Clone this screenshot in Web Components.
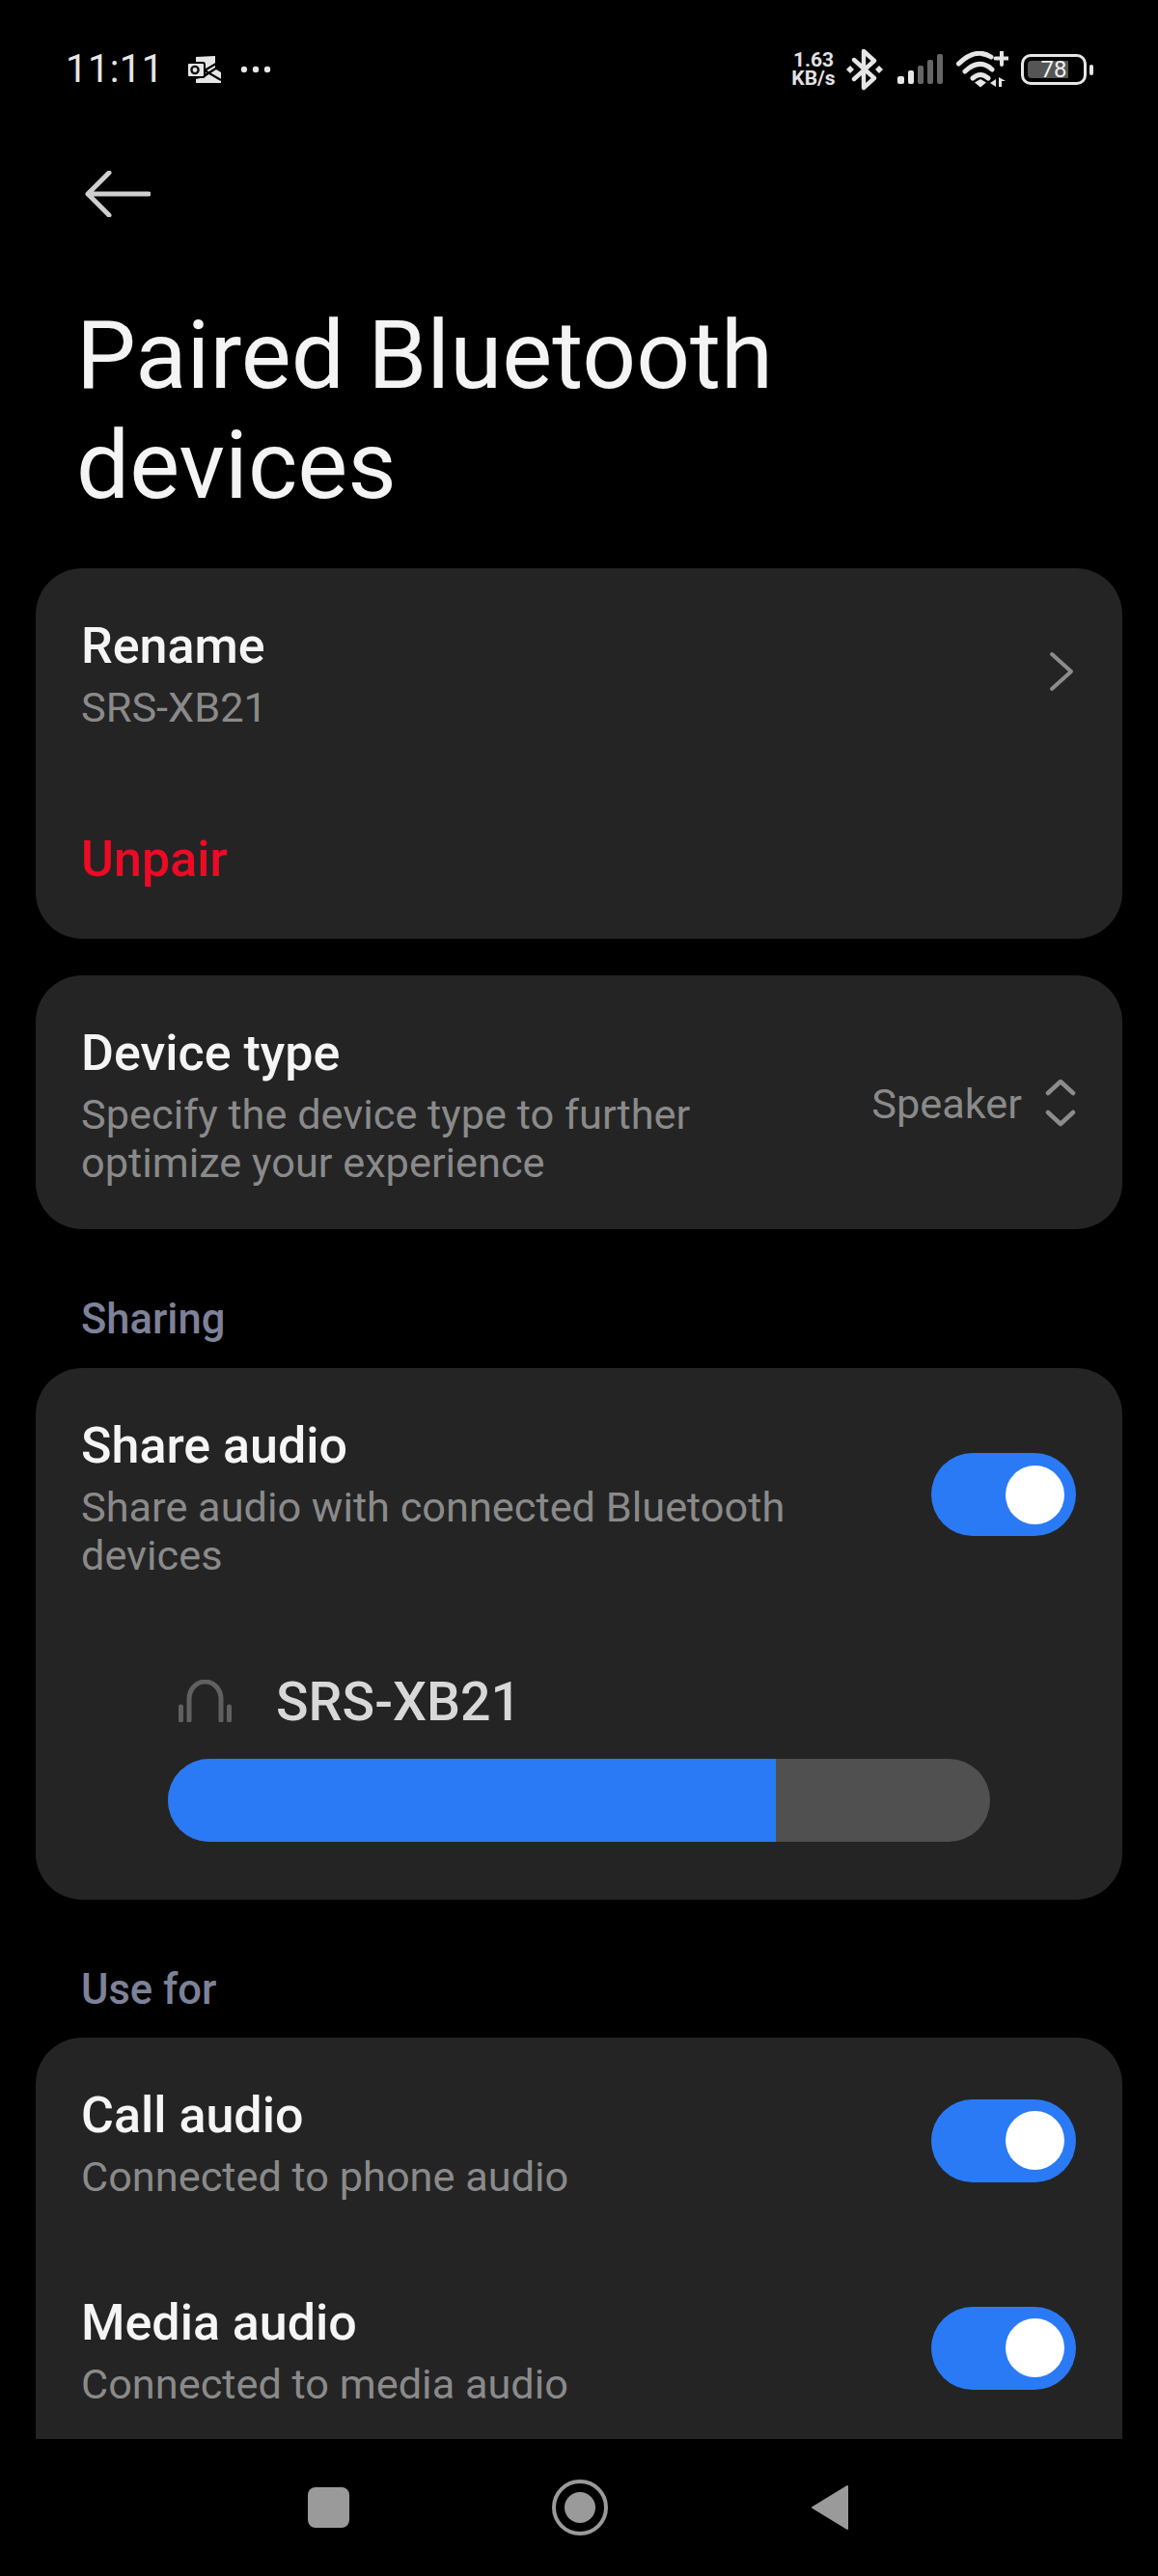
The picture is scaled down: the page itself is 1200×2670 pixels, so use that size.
<!DOCTYPE html>
<html>
<head>
<meta charset="utf-8">
<title>Paired Bluetooth devices</title>
<style>
  html, body { margin: 0; background: #000; }
  body { width: 1200px; height: 2670px; overflow: hidden; font-family: Roboto, "Liberation Sans", sans-serif; }
</style>
</head>
<body>
<phone-screen>
  <status-bar slot="status"></status-bar>
  <page-header slot="header">Paired Bluetooth devices</page-header>

  <setting-card class="rename">
    <setting-row chevron>
      <span slot="title">Rename</span>
      <span slot="sub">SRS-XB21</span>
    </setting-row>
    <danger-row>Unpair</danger-row>
  </setting-card>

  <setting-card>
    <setting-row>
      <span slot="title">Device type</span>
      <span slot="sub">Specify the device type to further optimize your experience</span>
      <type-picker slot="end">Speaker</type-picker>
    </setting-row>
  </setting-card>

  <section-label>Sharing</section-label>
  <setting-card>
    <setting-row>
      <span slot="title">Share audio</span>
      <span slot="sub">Share audio with connected Bluetooth devices</span>
      <toggle-switch slot="end"></toggle-switch>
    </setting-row>
    <volume-slider name="SRS-XB21" value="74"></volume-slider>
  </setting-card>

  <section-label>Use for</section-label>
  <!-- this card runs on under the nav bar, so its bottom corners stay out of view -->
  <setting-card class="cut-off">
    <setting-row compact>
      <span slot="title">Call audio</span>
      <span slot="sub">Connected to phone audio</span>
      <toggle-switch slot="end"></toggle-switch>
    </setting-row>
    <setting-row compact>
      <span slot="title">Media audio</span>
      <span slot="sub">Connected to media audio</span>
      <toggle-switch slot="end"></toggle-switch>
    </setting-row>
  </setting-card>

  <nav-bar slot="nav"></nav-bar>
</phone-screen>

<script>
function shadow(el, html) {
  el.attachShadow({ mode: "open" }).innerHTML = html;
}

class PhoneScreen extends HTMLElement {
  constructor() {
    super();
    shadow(this, `
      <style>
        :host { display: flex; flex-direction: column; width: 1200px; height: 2670px; background: #000; color: #fff; }
        main { flex: 1; min-height: 0; overflow: hidden; padding: 0 37px; }
      </style>
      <slot name="status"></slot>
      <slot name="header"></slot>
      <main><slot></slot></main>
      <slot name="nav"></slot>
    `);
  }
}

class StatusBar extends HTMLElement {
  constructor() {
    super();
    shadow(this, `
      <style>
        :host { display: flex; align-items: center; height: 144px; padding: 0 68px; box-sizing: border-box; color: #e6e6e6; }
        .time { font-size: 40px; line-height: 1; letter-spacing: .4px; margin-right: 23px; }
        .left { display: flex; align-items: center; flex: 1; }
        .right { display: flex; align-items: center; }
        svg { display: block; }
        .speed { font-size: 21px; line-height: 19px; font-weight: 700; text-align: center; width: 50px; margin-right: 9px; color: #e2e2e2; }
      </style>
      <div class="left">
        <span class="time">11:11</span>
        <svg width="36" height="28" viewBox="0 0 36 28" style="margin-right:20px">
          <path d="M10 1 L30 0 V12 L19 19 L10 14 Z M19 22 L31 14 L36 17 V28 H10 V24 Z" fill="#e6e6e6"/>
          <rect x="1" y="7" width="18" height="15" rx="2" fill="#e6e6e6" stroke="#000" stroke-width="2"/>
          <circle cx="9" cy="14.5" r="3.6" fill="none" stroke="#111" stroke-width="2.4"/>
          <path d="M19 15 L36 5 M19 15 L36 25" stroke="#000" stroke-width="2.2" fill="none"/>
        </svg>
        <svg width="32" height="8" viewBox="0 0 32 8">
          <circle cx="4" cy="4" r="3.2" fill="#e6e6e6"/><circle cx="16" cy="4" r="3.2" fill="#e6e6e6"/><circle cx="28" cy="4" r="3.2" fill="#e6e6e6"/>
        </svg>
      </div>
      <div class="right">
        <span class="speed">1.63<br>KB/s</span>
        <svg width="38" height="44" viewBox="0 0 38 44" style="margin-right:15px">
          <path d="M8 12 L29 31 L18 41 V3 L29 13 L8 32" fill="none" stroke="#e6e6e6" stroke-width="4.4" stroke-linejoin="round" stroke-linecap="round"/>
          <path d="M4 18 L8 22 L4 26 L0 22 Z M34 18 L38 22 L34 26 L30 22 Z" fill="#e6e6e6"/>
        </svg>
        <svg width="48" height="32" viewBox="0 0 48 32" style="margin-right:13px">
          <rect x="0" y="23" width="7" height="8" rx="2" fill="#e6e6e6"/>
          <rect x="11" y="17" width="6" height="14" rx="2" fill="#e6e6e6"/>
          <rect x="21" y="12" width="6" height="19" rx="2" fill="#666"/>
          <rect x="31" y="6" width="6" height="25" rx="2" fill="#666"/>
          <rect x="41" y="0" width="6" height="31" rx="2" fill="#666"/>
        </svg>
        <svg width="54" height="38" viewBox="0 0 54 38" style="margin-right:13px">
          <g fill="none" stroke="#e6e6e6" stroke-width="5" stroke-linecap="round">
            <path d="M2.500 13 Q20 -4 36 6"/>
            <path d="M9 21 Q24 7 37 19"/>
            <path d="M17 28 Q25 21 33 28"/>
            <path d="M47 1 V14 M40.500 7.500 H53.500" stroke-width="4"/>
          </g>
          <path d="M19 32.500 L25 29 L31 32.500 L25 37.500 Z" fill="#e6e6e6"/>
          <path d="M41 29 V37 L35 33 Z M44 27 V37 H47 V31 L51 31 Z" fill="#e6e6e6"/>
        </svg>
        <batt-icon level="78"></batt-icon>
      </div>
    `);
  }
}

class BattIcon extends HTMLElement {
  constructor() {
    super();
    const level = this.getAttribute("level");
    shadow(this, `
      <style>
        :host { display: flex; align-items: center; margin-right: -1px; }
        .body { position: relative; width: 68px; height: 32px; box-sizing: border-box; border: 3px solid #e6e6e6; border-radius: 10px; padding: 4px; }
        .fill { width: 42px; height: 100%; background: #555; border-radius: 4px 0 0 4px; }
        .num { position: absolute; inset: 0; display: flex; align-items: center; justify-content: center; font-size: 24px; color: #f0f0f0; }
        .tip { width: 4px; height: 11px; margin-left: 3px; background: #e6e6e6; border-radius: 2px; }
      </style>
      <div class="body"><div class="fill"></div><span class="num">${level}</span></div>
      <div class="tip"></div>
    `);
  }
}

class PageHeader extends HTMLElement {
  constructor() {
    super();
    shadow(this, `
      <style>
        :host { display: block; padding: 0 79px; }
        svg { display: block; margin: 33px 0 0 9px; }
        h1 { margin: 0; padding: 87px 0 0; width: 860px; height: 277px; font-size: 98px; font-weight: 400; line-height: 114px; color: #f4f4f4; }
      </style>
      <svg width="68" height="48" viewBox="0 0 68 48">
        <path d="M66 24 H3 M25 2 L3 24 L25 46" fill="none" stroke="#cfcfcf" stroke-width="5" stroke-linecap="round" stroke-linejoin="round"/>
      </svg>
      <h1><slot></slot></h1>
    `);
  }
}

class SettingCard extends HTMLElement {
  constructor() {
    super();
    shadow(this, `
      <style>
        :host { display: block; background: #242424; border-radius: 48px; margin-bottom: 38px; overflow: hidden; }
        :host(.cut-off) { padding-bottom: 80px; }
      </style>
      <slot></slot>
    `);
  }
}

class SettingRow extends HTMLElement {
  constructor() {
    super();
    const chevron = this.hasAttribute("chevron") ? `
      <svg width="26" height="42" viewBox="0 0 26 42" style="margin-right:2px">
        <path d="M3 3 L23 21 L3 39" fill="none" stroke="#8c8c8c" stroke-width="4" stroke-linecap="round" stroke-linejoin="round"/>
      </svg>` : "";
    shadow(this, `
      <style>
        :host { display: flex; align-items: center; justify-content: space-between; padding: 46px 48px 46px 47px; }
        :host([compact]) { padding-bottom: 48px; }
        .text { width: 790px; padding-top: 3px; margin-bottom: -3px; }
        .title { font-size: 52px; font-weight: 500; line-height: 64px; color: #f5f5f5; }
        .sub { margin-top: 7px; font-size: 43.3px; line-height: 50px; color: #8a8a8a; }
      </style>
      <div class="text">
        <div class="title"><slot name="title"></slot></div>
        <div class="sub"><slot name="sub"></slot></div>
      </div>
      <slot name="end"></slot>
      ${chevron}
    `);
  }
}

class DangerRow extends HTMLElement {
  constructor() {
    super();
    shadow(this, `
      <style>
        :host { display: block; padding: 56px 47px 49px; font-size: 52px; font-weight: 500; line-height: 66px; color: #ee0a24; }
      </style>
      <slot></slot>
    `);
  }
}

class TypePicker extends HTMLElement {
  constructor() {
    super();
    shadow(this, `
      <style>
        :host { display: flex; align-items: center; gap: 24px; font-size: 43.3px; color: #8a8a8a; }
        span { padding: 3px 0 0 2px; }
        svg { display: block; }
      </style>
      <span><slot></slot></span>
      <svg width="32" height="50" viewBox="0 0 32 50">
        <path d="M3 15 L16 3 L29 15 M3 35 L16 47 L29 35" fill="none" stroke="#8c8c8c" stroke-width="4.500" stroke-linecap="round" stroke-linejoin="round"/>
      </svg>
    `);
  }
}

class ToggleSwitch extends HTMLElement {
  constructor() {
    super();
    shadow(this, `
      <style>
        :host { display: flex; align-items: center; justify-content: flex-end; flex: none; width: 150px; height: 86px; box-sizing: border-box; padding-right: 12px; background: #2a7af6; border-radius: 43px; }
        i { display: block; width: 61px; height: 61px; border-radius: 50%; background: #fff; }
      </style>
      <i></i>
    `);
  }
}

class SectionLabel extends HTMLElement {
  constructor() {
    super();
    shadow(this, `
      <style>
        :host { display: block; padding: 31px 47px 24.500px; font-size: 43.500px; font-weight: 500; line-height: 50px; color: #7e8299; }
      </style>
      <slot></slot>
    `);
  }
}

class VolumeSlider extends HTMLElement {
  constructor() {
    super();
    const name = this.getAttribute("name");
    const value = this.getAttribute("value");
    shadow(this, `
      <style>
        :host { display: block; padding: 46px 137px 60px; }
        .head { display: flex; align-items: center; gap: 46px; height: 72px; padding-left: 11px; margin-bottom: 24px; font-size: 55.500px; font-weight: 500; color: #d8d8d8; }
        .head span { padding-top: 4px; }
        svg { display: block; }
        .track { height: 86px; background: #505050; border-radius: 43px; overflow: hidden; }
        .fill { height: 100%; background: #2a7af6; width: ${value}%; }
      </style>
      <div class="head">
        <svg width="55" height="44" viewBox="0 0 55 44">
          <path d="M11 42 V20 a16.500 18 0 0 1 33 0 V42" fill="none" stroke="#606060" stroke-width="5" stroke-linecap="round"/>
          <path d="M2.500 28 V42 M52.500 28 V42" fill="none" stroke="#606060" stroke-width="5" stroke-linecap="round"/>
        </svg>
        <span>${name}</span>
      </div>
      <div class="track"><div class="fill"></div></div>
    `);
  }
}

class NavBar extends HTMLElement {
  constructor() {
    super();
    shadow(this, `
      <style>
        :host { display: block; height: 142px; background: #000; }
        .row { display: flex; align-items: center; justify-content: space-between; height: 142px; padding: 0 320px 0 319px; box-sizing: border-box; }
        svg { display: block; }
      </style>
      <div class="row">
        <svg width="43" height="42" viewBox="0 0 43 42"><rect width="43" height="42" rx="8" fill="#9a9a9a"/></svg>
        <svg width="58" height="58" viewBox="0 0 58 58">
          <circle cx="29" cy="29" r="27" fill="none" stroke="#9a9a9a" stroke-width="4"/>
          <circle cx="29" cy="29" r="16" fill="#9a9a9a"/>
        </svg>
        <svg width="40" height="48" viewBox="0 0 40 48"><path d="M38 2 V46 L2 24 Z" fill="#9a9a9a" stroke="#9a9a9a" stroke-width="2" stroke-linejoin="round"/></svg>
      </div>
    `);
  }
}

customElements.define("phone-screen", PhoneScreen);
customElements.define("status-bar", StatusBar);
customElements.define("batt-icon", BattIcon);
customElements.define("page-header", PageHeader);
customElements.define("setting-card", SettingCard);
customElements.define("setting-row", SettingRow);
customElements.define("danger-row", DangerRow);
customElements.define("type-picker", TypePicker);
customElements.define("toggle-switch", ToggleSwitch);
customElements.define("section-label", SectionLabel);
customElements.define("volume-slider", VolumeSlider);
customElements.define("nav-bar", NavBar);
</script>
</body>
</html>
